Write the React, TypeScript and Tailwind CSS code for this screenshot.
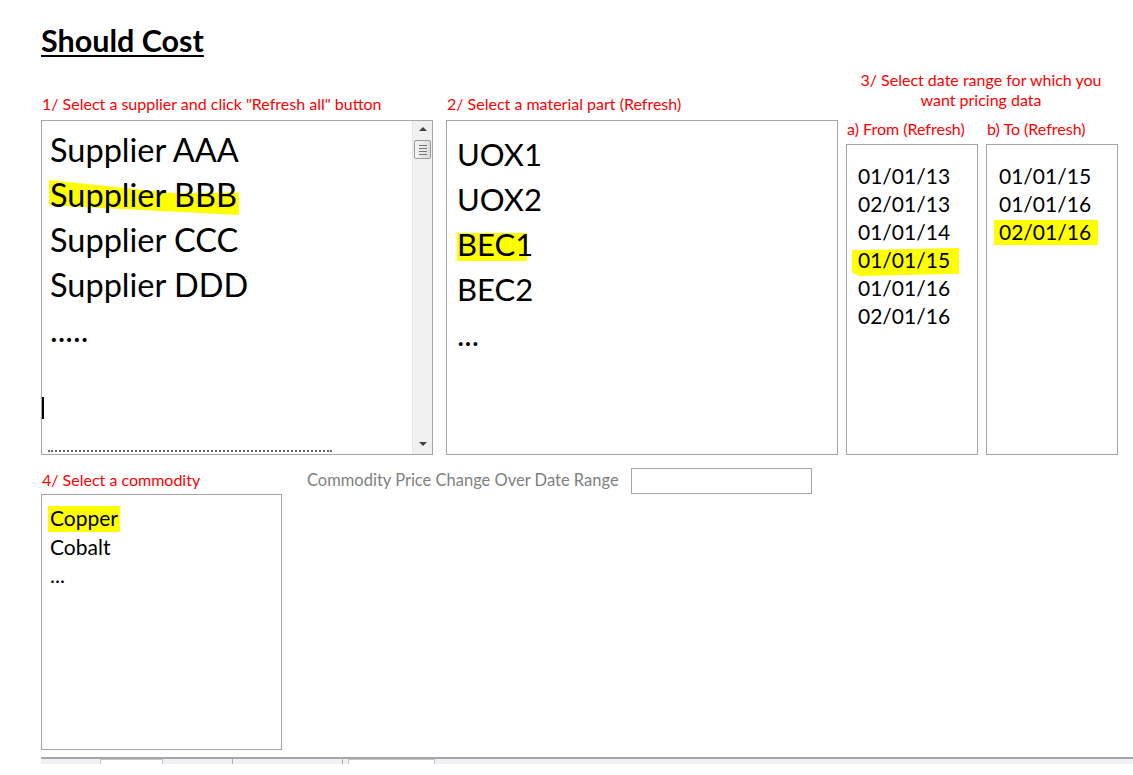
import React from 'react';

const font = { fontFamily: 'Lato, "Liberation Sans", sans-serif' };

function Marker({ children, clip, className }: { children: React.ReactNode; clip: string; className: string }) {
  return (
    <span className="relative inline-block">
      <span className={`absolute bg-[#ffff00] ${clip} ${className}`} />
      <span className="relative">{children}</span>
    </span>
  );
}

function Scrollbar() {
  return (
    <div className="w-[20px] flex flex-col items-center border-l border-[#e6e6e6] bg-[#f0f0f0] pt-[6px] pb-[8px]">
      <div className="w-0 h-0 border-l-[4px] border-r-[4px] border-b-[4px] border-l-transparent border-r-transparent border-b-[#404040]" />
      <div className="mt-[9px] w-[17px] h-[19px] rounded-[2px] border border-[#999] bg-gradient-to-r from-[#f6f6f6] to-[#dcdcdc] flex flex-col items-center justify-center gap-[2px]">
        <span className="w-[8px] h-px bg-[#777]" />
        <span className="w-[8px] h-px bg-[#777]" />
        <span className="w-[8px] h-px bg-[#777]" />
        <span className="w-[8px] h-px bg-[#777]" />
      </div>
      <div className="flex-1" />
      <div className="w-0 h-0 border-l-[4px] border-r-[4px] border-t-[4px] border-l-transparent border-r-transparent border-t-[#404040]" />
    </div>
  );
}

export default function App() {
  return (
    <div className="w-[1133px] h-[775px] overflow-hidden bg-white text-black flex flex-col" style={font}>
      <div className="pl-[41px] pt-[21px]">
        <h1 className="text-[30.5px] font-bold underline decoration-[2px] underline-offset-[3px] leading-[38px]">
          Should Cost
        </h1>
      </div>

      <div className="flex items-end pl-[41px] mt-[11px]">
        <div className="w-[392px]">
          <div className="text-[16px] text-[#ff0000] leading-[20px] pl-px mb-[6px]">
            1/ Select a supplier and click "Refresh all" button
          </div>
          <div className="relative h-[335px] border border-[#a6a6a6] flex overflow-hidden">
            <div className="flex-1 pl-[8px] pt-[6px] text-[32.5px] leading-[45px]">
              <div>Supplier AAA</div>
              <div>
                <Marker clip="[clip-path:polygon(0%_0%,66%_38%,100%_36%,100%_100%,0%_72%)]" className="-left-px -right-[2px] top-[8px] bottom-[2px]">
                  Supplier BBB
                </Marker>
              </div>
              <div>Supplier CCC</div>
              <div>Supplier DDD</div>
              <div>.....</div>
            </div>
            <Scrollbar />
            <span className="absolute left-0 top-[276px] w-[2px] h-[22px] bg-black" />
            <span className="absolute left-[6px] bottom-[2px] w-[284px] border-t-2 border-dotted border-[#666]" />
          </div>
        </div>

        <div className="w-[392px] ml-[13px]">
          <div className="text-[16px] text-[#ff0000] leading-[20px] pl-px mb-[6px]">
            2/ Select a material part (Refresh)
          </div>
          <div className="h-[335px] border border-[#a6a6a6] pl-[10px] pt-[11px] text-[31px] leading-[45px]">
            <div>UOX1</div>
            <div>UOX2</div>
            <div>
              <Marker clip="" className="left-0 right-[6px] top-[11px] bottom-[6px]">
                BEC1
              </Marker>
            </div>
            <div>BEC2</div>
            <div>...</div>
          </div>
        </div>

        <div className="w-[272px] ml-[8px]">
          <div className="text-[16px] text-[#ff0000] leading-[20px] text-center mb-[9px] pr-[2px]">
            3/ Select date range for which you
            <br />
            want pricing data
          </div>
          <div className="flex gap-[8px]">
            <div className="w-[132px]">
              <div className="text-[16px] text-[#ff0000] leading-[20px] pl-px mb-[5px]">a) From (Refresh)</div>
              <div className="h-[311px] border border-[#a6a6a6] pl-[11px] pt-[17px] text-[21px] leading-[28px]">
                <div>01/01/13</div>
                <div>02/01/13</div>
                <div>01/01/14</div>
                <div>
                  <Marker clip="[clip-path:polygon(0%_8%,100%_0%,100%_92%,6%_100%,0%_86%)]" className="-left-[6px] -right-[9px] top-[2px] -bottom-[2px]">
                    01/01/15
                  </Marker>
                </div>
                <div>01/01/16</div>
                <div>02/01/16</div>
              </div>
            </div>
            <div className="w-[132px]">
              <div className="text-[16px] text-[#ff0000] leading-[20px] pl-px mb-[5px]">b) To (Refresh)</div>
              <div className="h-[311px] border border-[#a6a6a6] pl-[12px] pt-[17px] text-[21px] leading-[28px]">
                <div>01/01/15</div>
                <div>01/01/16</div>
                <div>
                  <Marker clip="" className="-left-[5px] -right-[7px] top-[2px] bottom-[1px]">
                    02/01/16
                  </Marker>
                </div>
              </div>
            </div>
          </div>
        </div>
      </div>

      <div className="flex pl-[41px] mt-[15px]">
        <div className="w-[241px]">
          <div className="text-[16px] text-[#ff0000] leading-[20px] pl-px mb-[4px]">4/ Select a commodity</div>
          <div className="h-[256px] border border-[#a6a6a6] pl-[8px] pt-[9px] text-[21px] leading-[28.5px]">
            <div>
              <Marker clip="" className="-left-[2px] -right-[2px] top-[2px] bottom-[1px]">
                Copper
              </Marker>
            </div>
            <div>Cobalt</div>
            <div>...</div>
          </div>
        </div>
        <div className="flex items-center self-start h-[20px] ml-[25px]">
          <span className="text-[16.5px] text-[#7f7f7f] leading-[20px]">Commodity Price Change Over Date Range</span>
          <span className="ml-[12px] mt-[2px] w-[181px] h-[26px] border border-[#a6a6a6]" />
        </div>
      </div>

      <div className="ml-[41px] mt-[7px] border-t-2 border-[#a6a6a6]">
        <div className="h-[5px] bg-[#eef0f4] flex items-start">
          <span className="ml-[59px] w-[63px] h-[5px] border border-b-0 border-[#c8c8c8] bg-white" />
          <span className="ml-[69px] w-px h-[5px] bg-[#b0b0b0]" />
          <span className="ml-[109px] w-px h-[5px] bg-[#b0b0b0]" />
          <span className="ml-[5px] w-[87px] h-[5px] border border-b-0 border-[#c8c8c8] bg-white" />
        </div>
      </div>
    </div>
  );
}
